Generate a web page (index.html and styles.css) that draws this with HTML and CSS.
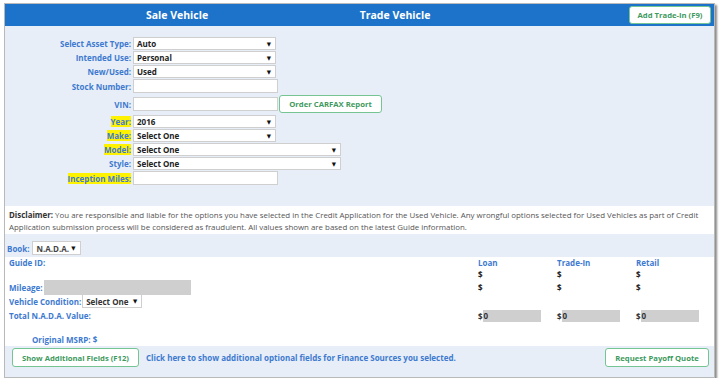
FILE: index.html
```html
<!DOCTYPE html>
<html lang="en">
<head>
  <meta charset="UTF-8">
  <title>Vehicle</title>
  <link rel="stylesheet" href="styles.css">
</head>
<body>
  <div class="frame">
    <div class="header">
      <div class="tab-sale">Sale Vehicle</div>
      <div class="tab-trade">Trade Vehicle</div>
      <button class="btn btn-head">Add Trade-In (F9)</button>
    </div>

    <div class="vehicle-form">
      <label class="lbl">Select Asset Type:</label>
      <div class="sel sel-short"><span>Auto</span><span class="arrow">&#9660;</span></div>

      <label class="lbl">Intended Use:</label>
      <div class="sel sel-short"><span>Personal</span><span class="arrow">&#9660;</span></div>

      <label class="lbl">New/Used:</label>
      <div class="sel sel-short"><span>Used</span><span class="arrow">&#9660;</span></div>

      <label class="lbl">Stock Number:</label>
      <div class="txt"></div>

      <label class="lbl lbl-vin">VIN:</label>
      <div class="vin-row">
        <div class="txt"></div>
        <button class="btn btn-carfax">Order CARFAX Report</button>
      </div>

      <label class="lbl"><mark>Year:</mark></label>
      <div class="sel sel-short"><span>2016</span><span class="arrow">&#9660;</span></div>

      <label class="lbl"><mark>Make:</mark></label>
      <div class="sel sel-short"><span>Select One</span><span class="arrow">&#9660;</span></div>

      <label class="lbl"><mark>Model:</mark></label>
      <div class="sel sel-long"><span>Select One</span><span class="arrow">&#9660;</span></div>

      <label class="lbl">Style:</label>
      <div class="sel sel-long"><span>Select One</span><span class="arrow">&#9660;</span></div>

      <label class="lbl"><mark>Inception Miles:</mark></label>
      <div class="txt"></div>
    </div>

    <div class="disclaimer">
      <b>Disclaimer:</b> You are responsible and liable for the options you have selected in the Credit Application for the Used Vehicle. Any wrongful options selected for Used Vehicles as part of Credit Application submission process will be considered as fraudulent. All values shown are based on the latest Guide information.
    </div>

    <div class="book-row">
      <span class="lbl">Book:</span>
      <div class="sel sel-book"><span>N.A.D.A.</span><span class="arrow">&#9660;</span></div>
    </div>

    <div class="values">
      <div class="lbl vl">Guide ID:</div>
      <div class="lbl">Loan</div>
      <div class="lbl">Trade-In</div>
      <div class="lbl">Retail</div>

      <div></div>
      <div class="dollar">$</div>
      <div class="dollar">$</div>
      <div class="dollar">$</div>

      <div class="vl mileage"><span class="lbl">Mileage:</span><div class="gray-box gray-mileage"></div></div>
      <div class="dollar">$</div>
      <div class="dollar">$</div>
      <div class="dollar">$</div>

      <div class="vl condition"><span class="lbl">Vehicle Condition:</span>
        <div class="sel sel-cond"><span>Select One</span><span class="arrow">&#9660;</span></div>
      </div>
      <div></div><div></div><div></div>

      <div class="lbl vl">Total N.A.D.A. Value:</div>
      <div class="zero"><span>$</span><div class="gray-box">0</div></div>
      <div class="zero"><span>$</span><div class="gray-box">0</div></div>
      <div class="zero"><span>$</span><div class="gray-box">0</div></div>
    </div>

    <div class="msrp lbl">Original MSRP: $</div>

    <div class="footer">
      <button class="btn btn-more">Show Additional Fields (F12)</button>
      <span class="lbl footer-link">Click here to show additional optional fields for Finance Sources you selected.</span>
      <button class="btn btn-payoff">Request Payoff Quote</button>
    </div>
  </div>
</body>
</html>
```

FILE: styles.css
```css
body {
  margin: 0;
  font-family: "Open Sans", "DejaVu Sans", sans-serif;
  font-size: 8px;
  color: #333;
  background: #fff;
}

.frame {
  margin: 3px 0 0 4px;
  width: 709px;
  border: 1px solid #b9b9b9;
  box-shadow: 2px 2px 2px #8c8c8c;
  background: #fff;
}

.header {
  display: flex;
  align-items: center;
  height: 22px;
  background: #1c73c9;
  color: #fff;
  font-weight: bold;
  font-size: 10.5px;
}

.tab-sale {
  width: 344px;
  text-align: center;
}

.tab-trade {
  width: 92px;
  text-align: center;
}

.btn {
  font-family: inherit;
  font-weight: bold;
  font-size: 7.7px;
  color: #3e9a5e;
  background: #fff;
  border: 1px solid #74c592;
  border-radius: 3px;
  padding: 0;
  cursor: pointer;
}

.btn-head {
  margin-left: auto;
  margin-right: 3px;
  width: 82px;
  height: 18px;
}

.lbl {
  color: #3d7ad0;
  font-weight: bold;
}

mark {
  background: #fff200;
  color: #3d7ad0;
}

.vehicle-form {
  display: grid;
  grid-template-columns: 126px auto;
  column-gap: 2px;
  row-gap: 1px;
  justify-items: start;
  align-items: center;
  background: #e8eef7;
  padding: 11px 0 21px 0;
}

.vehicle-form .lbl {
  justify-self: end;
}

.sel {
  display: flex;
  align-items: center;
  justify-content: space-between;
  height: 13px;
  box-sizing: border-box;
  padding: 0 4px 0 3px;
  background: #fff;
  border: 1px solid #cfcfcf;
  font-weight: bold;
  color: #222;
}

.arrow {
  font-size: 5.5px;
  color: #111;
}

.sel-short {
  width: 143px;
}

.sel-long {
  width: 208px;
}

.txt {
  width: 145px;
  height: 14px;
  box-sizing: border-box;
  background: #fff;
  border: 1px solid #cfcfcf;
}

.vin-row {
  display: flex;
  align-items: center;
  gap: 1px;
  padding: 1px 0;
}

.btn-carfax {
  width: 103px;
  height: 18px;
}

.disclaimer {
  margin-top: 2px;
  background: #fff;
  padding: 1px 2px 1px 4px;
  line-height: 12px;
  font-size: 7.9px;
  color: #555;
}

.disclaimer b {
  color: #333;
}

.book-row {
  display: flex;
  align-items: center;
  gap: 2px;
  background: #e8eef7;
  padding: 7px 2px 2px 2px;
}

.sel-book {
  width: 49px;
  height: 14px;
  padding: 0 4px;
  color: #444;
}

.values {
  display: grid;
  grid-template-columns: 469px 79px 79px 79px;
  grid-template-rows: 11px 12px 14px 14px 14px;
  align-items: center;
  padding: 0 4px;
}

.dollar {
  font-weight: bold;
  color: #222;
}

.mileage,
.condition {
  display: flex;
  align-items: center;
  gap: 1px;
}

.gray-box {
  background: #cfcfcf;
  height: 12px;
  box-sizing: border-box;
  padding-left: 1px;
  font-weight: bold;
  color: #333;
  line-height: 12px;
}

.gray-mileage {
  width: 147px;
  height: 15px;
}

.sel-cond {
  width: 60px;
  height: 14px;
  color: #333;
}

.zero {
  display: flex;
  align-items: center;
  color: #333;
  font-weight: bold;
  position: relative;
  top: 1px;
}

.zero .gray-box {
  width: 58px;
}

.msrp {
  padding: 12px 0 1px 27px;
}

.footer {
  display: flex;
  align-items: center;
  background: #e8eef7;
  padding: 2px 5px 10px 7px;
}

.btn-more {
  width: 127px;
  height: 19px;
}

.footer-link {
  margin-left: 7px;
}

.btn-payoff {
  margin-left: auto;
  width: 104px;
  height: 19px;
}
```
